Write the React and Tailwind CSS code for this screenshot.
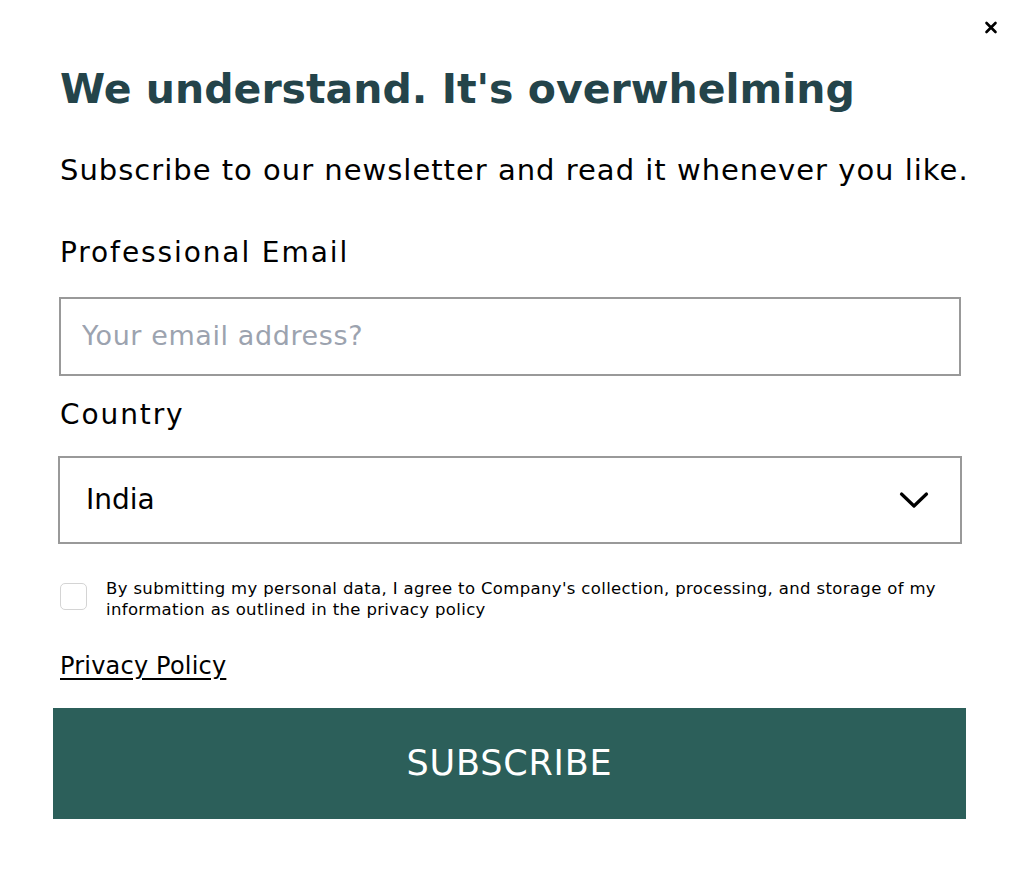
import { X } from 'lucide-react'

// Newsletter subscribe modal
export default function App() {
  return (
    <div className="relative w-[1020px] h-[872px] bg-white text-black font-['DejaVu_Sans','Noto_Sans',sans-serif]">
      {/* Close */}
      <button className="absolute right-[20px] top-[18px] w-[18px] h-[18px] flex items-center justify-center">
        <X size={19} strokeWidth={3.5} />
      </button>

      <div className="pl-[60px] pt-[61px] pr-[54px]">
        <h1 className="h-[56px] leading-[56px] text-[41px] font-bold text-[#24444a] whitespace-nowrap">
          We understand. It's overwhelming
        </h1>
        <p className="mt-[33px] h-[40px] leading-[40px] text-[29px] tracking-[1px] whitespace-nowrap">
          Subscribe to our newsletter and read it whenever you like.
        </p>

        <label className="block mt-[45px] h-[36px] leading-[36px] text-[28px] tracking-[1.9px]">Professional Email</label>
        <div className="mt-[26px] -ml-px w-[902px] h-[79px] border-2 border-[#999999] flex items-center px-[21px]">
          <input
            className="w-full outline-none text-[27px] tracking-[0.6px] placeholder:text-[#9ca3af] bg-transparent"
            placeholder="Your email address?"
          />
        </div>

        <label className="block mt-[21px] h-[36px] leading-[36px] text-[28px] tracking-[1.9px]">Country</label>
        <div className="mt-[23px] -ml-[2px] w-[904px] h-[88px] border-2 border-[#999999] flex items-center justify-between pl-[26px] pr-[31px]">
          <span className="text-[28px]">India</span>
          <svg width="30" height="18" viewBox="0 0 30 18" fill="none" stroke="currentColor" strokeWidth="3.2" strokeLinecap="round" strokeLinejoin="round">
            <polyline points="2.5,3 15,15 27.5,3" />
          </svg>
        </div>

        <div className="mt-[34px] flex items-start gap-[19px]">
          <span className="mt-[5px] w-[27px] h-[27px] shrink-0 rounded-[5px] border border-[#d4d4d4]" />
          <p className="text-[16.5px] leading-[21px] tracking-[0.35px] whitespace-nowrap">
            By submitting my personal data, I agree to Company's collection, processing, and storage of my
            <br />
            information as outlined in the privacy policy
          </p>
        </div>

        <a className="block mt-[32px] h-[28px] leading-[28px] text-[24px] tracking-[0.2px] underline underline-offset-[4px] w-fit">
          Privacy Policy
        </a>

        <button className="mt-[28px] -ml-[7px] w-[913px] h-[111px] bg-[#2c5f5a] text-white text-[35px] tracking-[0.8px]">
          SUBSCRIBE
        </button>
      </div>
    </div>
  )
}
